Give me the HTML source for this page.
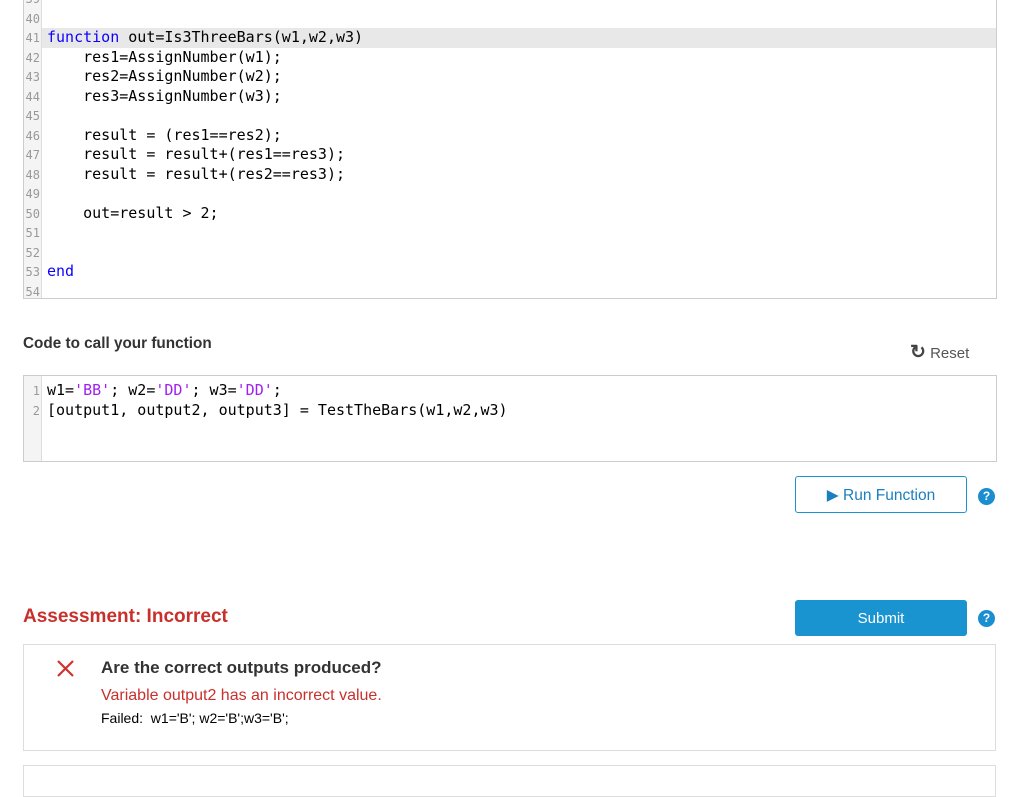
<!DOCTYPE html>
<html><head><style>
body{margin:0;width:1024px;height:778px;overflow:hidden;background:#fff;font-family:"Liberation Sans",sans-serif;position:relative}
.ed{position:absolute;left:23px;width:972px;border:1px solid #ccc;background:#fff;font-family:"DejaVu Sans Mono","Liberation Mono",monospace;font-size:15px;color:#000}
.gut{position:absolute;left:0;top:0;bottom:0;width:17px;background:#f4f4f4;border-right:1px solid #ddd}
.ln{position:absolute;left:0;width:972px;height:19.5px;line-height:19.5px;white-space:pre}
.ln .n{display:inline-block;width:16px;text-align:right;color:#999;font-size:12px;margin-right:7px}
.kw{color:#0e00ff}.st{color:#a020f0}
.hl{background:#e8e8e8}
.abs{position:absolute}
</style></head><body>
<div class="ed" style="top:-10px;height:307px">
<div class="gut"></div>
<div class="ln" style="top:-2px"><span class="n">39</span></div>
<div class="ln" style="top:17.5px"><span class="n">40</span></div>
<div class="ln hl" style="top:37px;left:18px;width:954px"></div>
<div class="ln" style="top:37px"><span class="n">41</span><span class="kw">function</span> out=Is3ThreeBars(w1,w2,w3)</div>
<div class="ln" style="top:56.5px"><span class="n">42</span>    res1=AssignNumber(w1);</div>
<div class="ln" style="top:76px"><span class="n">43</span>    res2=AssignNumber(w2);</div>
<div class="ln" style="top:95.5px"><span class="n">44</span>    res3=AssignNumber(w3);</div>
<div class="ln" style="top:115px"><span class="n">45</span></div>
<div class="ln" style="top:134.5px"><span class="n">46</span>    result = (res1==res2);</div>
<div class="ln" style="top:154px"><span class="n">47</span>    result = result+(res1==res3);</div>
<div class="ln" style="top:173.5px"><span class="n">48</span>    result = result+(res2==res3);</div>
<div class="ln" style="top:193px"><span class="n">49</span></div>
<div class="ln" style="top:212.5px"><span class="n">50</span>    out=result &gt; 2;</div>
<div class="ln" style="top:232px"><span class="n">51</span></div>
<div class="ln" style="top:251.5px"><span class="n">52</span></div>
<div class="ln" style="top:271px"><span class="n">53</span><span class="kw">end</span></div>
<div class="ln" style="top:290.5px"><span class="n">54</span></div>
</div>
<div class="abs" style="left:23px;top:335px;font-size:15.3px;font-weight:bold;color:#333">Code to call your function</div>
<div class="abs" style="left:910px;top:341px;font-size:15px;color:#555"><span style="font-size:19px;font-weight:bold;color:#444">&#x21bb;</span> Reset</div>
<div class="ed" style="top:375px;height:85px">
<div class="gut"></div>
<div class="ln" style="top:5px"><span class="n">1</span>w1=<span class="st">'BB'</span>; w2=<span class="st">'DD'</span>; w3=<span class="st">'DD'</span>;</div>
<div class="ln" style="top:24.5px"><span class="n">2</span>[output1, output2, output3] = TestTheBars(w1,w2,w3)</div>
</div>
<div class="abs" style="left:795px;top:476px;width:170px;height:35px;border:1px solid #1a93d1;border-radius:3px;color:#1a7fc1;font-size:15.5px;line-height:37px;text-align:center">&#9654; Run Function</div>
<div class="abs" style="left:978px;top:488px;width:17px;height:17px;border-radius:50%;background:#1a8ed0;color:#fff;font-size:12px;font-weight:bold;text-align:center;line-height:17px">?</div>
<div class="abs" style="left:23px;top:606px;font-size:19px;font-weight:bold;color:#c8302c">Assessment: Incorrect</div>
<div class="abs" style="left:795px;top:600px;width:172px;height:36px;background:#1a93d1;border-radius:3px;color:#fff;font-size:15px;line-height:38px;text-align:center">Submit</div>
<div class="abs" style="left:978px;top:610px;width:17px;height:17px;border-radius:50%;background:#1a8ed0;color:#fff;font-size:12px;font-weight:bold;text-align:center;line-height:17px">?</div>
<div class="abs" style="left:23px;top:644px;width:971px;height:105px;border:1px solid #ddd"></div>
<svg class="abs" style="left:57px;top:660px" width="17" height="17"><path d="M1 1L16 16M16 1L1 16" stroke="#d0332c" stroke-width="2.2"/></svg>
<div class="abs" style="left:101px;top:658px;font-size:17px;font-weight:bold;color:#333">Are the correct outputs produced?</div>
<div class="abs" style="left:101px;top:687px;font-size:16px;color:#c8302c">Variable output2 has an incorrect value.</div>
<div class="abs" style="left:101px;top:710px;font-size:14px;color:#000">Failed:&nbsp; w1='B'; w2='B';w3='B';</div>
<div class="abs" style="left:23px;top:765px;width:971px;height:30px;border:1px solid #ddd"></div>
</body></html>
